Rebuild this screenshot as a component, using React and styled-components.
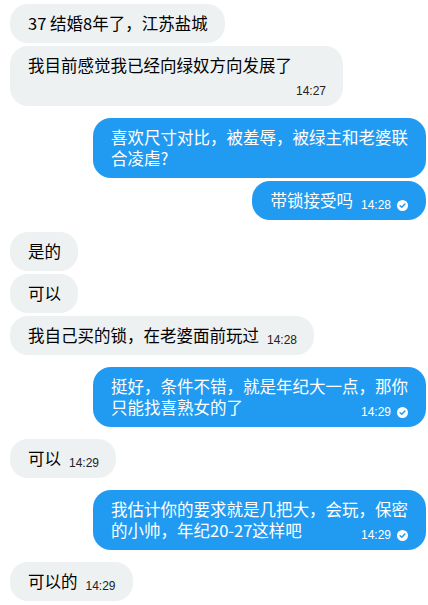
import React from 'react';
import styled, { createGlobalStyle } from 'styled-components';

const messages = [
  { id: 1, out: false, text: '37 结婚8年了，江苏盐城' },
  { id: 2, out: false, text: '我目前感觉我已经向绿奴方向发展了', time: '14:27' },
  { id: 3, out: true, text: '喜欢尺寸对比，被羞辱，被绿主和老婆联合凌虐?' },
  { id: 4, out: true, text: '带锁接受吗', time: '14:28' },
  { id: 5, out: false, text: '是的' },
  { id: 6, out: false, text: '可以' },
  { id: 7, out: false, text: '我自己买的锁，在老婆面前玩过', time: '14:28' },
  {
    id: 8,
    out: true,
    text: '挺好，条件不错，就是年纪大一点，那你只能找喜熟女的了',
    time: '14:29',
  },
  { id: 9, out: false, text: '可以', time: '14:29' },
  {
    id: 10,
    out: true,
    text: '我估计你的要求就是几把大，会玩，保密的小帅，年纪20-27这样吧',
    time: '14:29',
  },
  { id: 11, out: false, text: '可以的', time: '14:29' },
];

const ReadCheck = () => (
  <svg width="11" height="11" viewBox="0 0 11 11">
    <circle cx="5.5" cy="5.5" r="5.5" fill="#fff" />
    <path
      d="M3.1 5.7 L4.8 7.3 L7.9 4"
      fill="none"
      stroke="#219bf1"
      strokeWidth="1.5"
      strokeLinecap="round"
      strokeLinejoin="round"
    />
  </svg>
);

const App = () => (
  <>
    <GlobalStyle />
    <Chat>
      {messages.map((m, i) => {
        // consecutive messages from the same side sit closer together
        const grouped = i > 0 && messages[i - 1].out === m.out;
        return (
          <Row key={m.id} $out={m.out} $grouped={grouped}>
            <Bubble $out={m.out}>
              <span>{m.text}</span>
              {m.time && (
                <Meta $out={m.out}>
                  {m.time}
                  {m.out && <ReadCheck />}
                </Meta>
              )}
            </Bubble>
          </Row>
        );
      })}
    </Chat>
  </>
);

const GlobalStyle = createGlobalStyle`
  html, body {
    margin: 0;
    padding: 0;
    background: #ffffff;
  }
`;

const Chat = styled.div`
  display: flex;
  flex-direction: column;
  padding: 4px 2px 0 10px;
  font-family: 'Noto Sans CJK SC', 'Liberation Sans', sans-serif;
`;

const Row = styled.div`
  display: flex;
  justify-content: ${(p) => (p.$out ? 'flex-end' : 'flex-start')};
  margin-top: ${(p) => (p.$grouped ? '3px' : '12px')};
  &:first-child {
    margin-top: 0;
  }
`;

const Bubble = styled.div`
  display: flow-root;
  max-width: 333px;
  box-sizing: border-box;
  padding: 9px 17px 9px 18px;
  border-radius: 18px;
  font-size: 16.5px;
  line-height: 21px;
  color: ${(p) => (p.$out ? '#ffffff' : '#000000')};
  background: ${(p) => (p.$out ? '#219bf1' : '#eef1f2')};
  word-break: break-all;
`;

// time + read mark floats at the end of the last line, or drops below it
const Meta = styled.span`
  float: right;
  display: flex;
  align-items: center;
  gap: 6px;
  margin: 9px ${(p) => (p.$out ? '1px' : '0')} 0 8px;
  font-family: 'Liberation Sans', Arial, sans-serif;
  font-size: 12px;
  line-height: 12px;
  color: ${(p) => (p.$out ? '#ffffff' : '#222222')};
`;

export default App;
